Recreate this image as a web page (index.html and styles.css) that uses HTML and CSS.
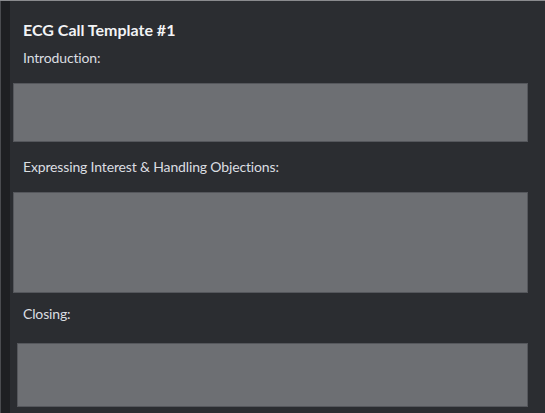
FILE: index.html
```html
<!DOCTYPE html>
<html>
<head>
<meta charset="utf-8">
<link rel="stylesheet" href="styles.css">
</head>
<body>
<div class="frame">
  <div class="strip"></div>
  <div class="main">
    <div class="title">ECG Call Template #1</div>
    <div class="label label-intro">Introduction:</div>
    <div class="box box-intro"></div>
    <div class="label label-interest">Expressing Interest &amp; Handling Objections:</div>
    <div class="box box-interest"></div>
    <div class="label label-closing">Closing:</div>
    <div class="box box-closing"></div>
  </div>
</div>
</body>
</html>
```

FILE: styles.css
```css
html, body {
  margin: 0;
  padding: 0;
  background: #2b2d31;
}
body {
  width: 545px;
  height: 413px;
  overflow: hidden;
  font-family: "Lato", "Noto Sans", sans-serif;
}
.frame {
  display: flex;
  height: 412px;
  border-top: 1px solid #8a8b8e;
  background: #2b2d31;
}
.strip {
  width: 9px;
  flex: none;
  background: #1e1f22;
  border-left: 1px solid #4a4b4f;
}
.main {
  flex: 1;
  display: flex;
  flex-direction: column;
  padding-top: 19px;
}
.title {
  margin-left: 13px;
  font-size: 16px;
  line-height: 20px;
  font-weight: 700;
  color: #f2f3f5;
}
.label {
  margin-left: 13px;
  font-size: 14px;
  line-height: 18px;
  letter-spacing: -0.15px;
  color: #dbdee1;
}
.label-intro { margin-top: 9px; }
.label-interest { margin-top: 16px; }
.label-closing { margin-top: 12px; }
.box {
  box-sizing: border-box;
  margin-left: 3px;
  width: 515px;
  background: #6d6f73;
  border: 1px solid #55575c;
}
.box-intro { margin-top: 16px; height: 59px; }
.box-interest { margin-top: 16px; height: 101px; }
.box-closing { margin-top: 20px; height: 64px; margin-left: 7px; width: 511px; }
```
